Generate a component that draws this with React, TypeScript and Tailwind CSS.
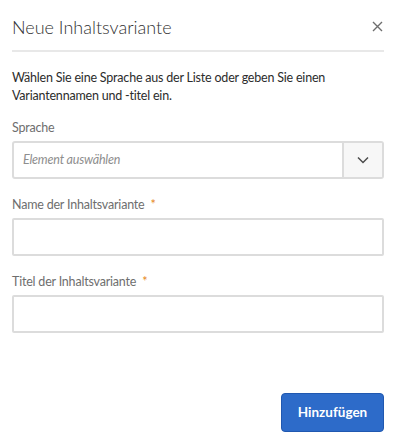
import React from "react";

function Label({ text, required }: { text: string; required?: boolean }) {
  return (
    <div className="text-[12.5px] tracking-[-0.2px] text-[#6e6e6e] leading-[18px] mb-[4px]">
      {text}
      {required && <span className="text-[#e68619] ml-[6px]">*</span>}
    </div>
  );
}

export default function App() {
  return (
    <div className="w-[400px] h-[443px] bg-white pl-3 pr-4 flex flex-col font-['Lato','Noto_Sans',sans-serif]">
      <div className="flex items-center justify-between h-[52px] pt-[4px] border-b-2 border-[#e8e8e8]">
        <h1 className="text-[18px] leading-[24px] font-light text-[#323232]">Neue Inhaltsvariante</h1>
        <button className="mr-[1px] mb-[2px] text-[#6e6e6e]">
          <svg width="11" height="11" viewBox="0 0 11 11">
            <path d="M1 1L10 10M10 1L1 10" stroke="currentColor" strokeWidth="1.4" />
          </svg>
        </button>
      </div>

      <p className="mt-[17px] text-[12.5px] tracking-[-0.2px] leading-[18px] text-[#2c2c2c] pr-[30px]">
        Wählen Sie eine Sprache aus der Liste oder geben Sie einen Variantennamen und -titel ein.
      </p>

      <div className="mt-[14px]">
        <Label text="Sprache" />
        <div className="flex h-[38px] border-2 border-[#dcdcdc] rounded-[3px]">
          <div className="flex-1 flex items-center px-[9px] text-[12.5px] tracking-[-0.2px] italic text-[#8e8e8e]">
            Element auswählen
          </div>
          <div className="w-[40px] flex items-center justify-center bg-[#f7f7f7] border-l-2 border-[#dcdcdc] text-[#4b4b4b]">
            <svg width="12" height="8" viewBox="0 0 12 8">
              <path d="M1 1.5L6 6.5L11 1.5" stroke="currentColor" strokeWidth="1.5" fill="none" />
            </svg>
          </div>
        </div>
      </div>

      <div className="mt-[17px]">
        <Label text="Name der Inhaltsvariante" required />
        <div className="h-[38px] border-2 border-[#dcdcdc] rounded-[2px]" />
      </div>

      <div className="mt-[17px]">
        <Label text="Titel der Inhaltsvariante" required />
        <div className="h-[38px] border-2 border-[#dcdcdc] rounded-[2px]" />
      </div>

      <div className="flex justify-end mt-[60px]">
        <button className="w-[103px] h-[39px] rounded-[4px] bg-[#2d6bc9] border border-[#2058b0] text-white text-[13.5px] font-bold">
          Hinzufügen
        </button>
      </div>
    </div>
  );
}
